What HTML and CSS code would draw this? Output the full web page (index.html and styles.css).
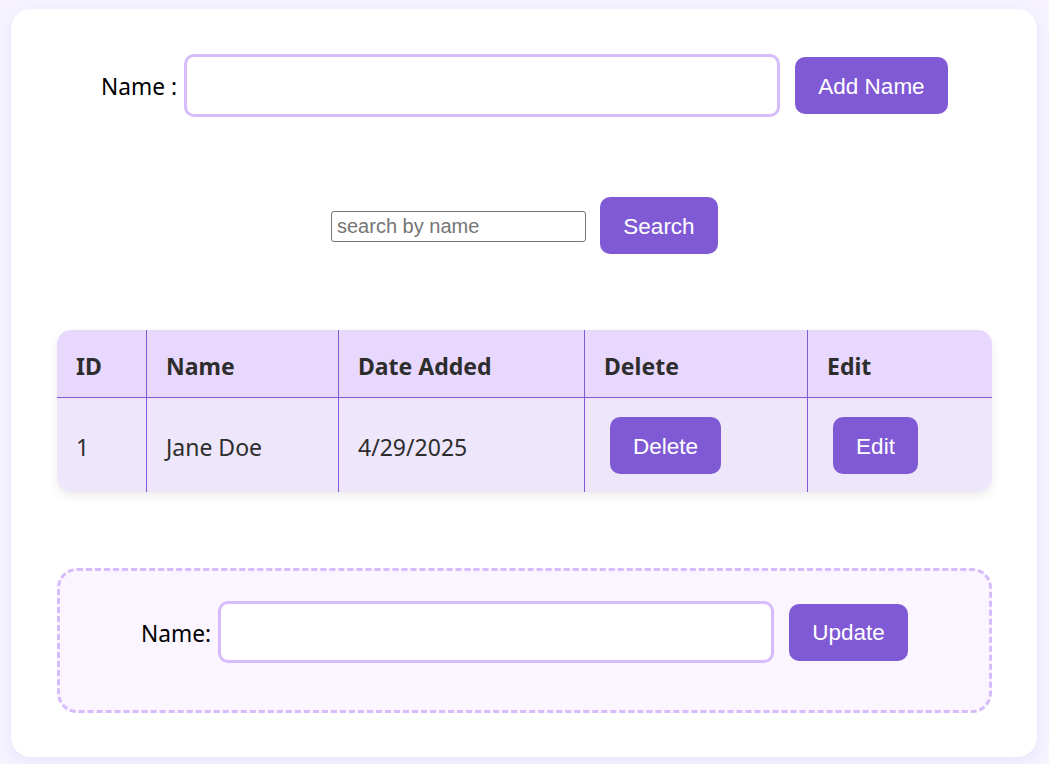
FILE: index.html
```html
<!DOCTYPE html>
<html>
<head>
<meta charset="utf-8">
<link rel="stylesheet" href="styles.css">
</head>
<body>
<div class="card">
  <div class="row add-row">
    <label class="label">Name :</label>
    <input class="name-input" type="text">
    <button class="btn btn-add">Add Name</button>
  </div>
  <div class="row search-row">
    <input class="search-input" type="text" placeholder="search by name">
    <button class="btn btn-search">Search</button>
  </div>
  <div class="table-wrap">
    <table class="table">
      <colgroup>
        <col class="c-id">
        <col class="c-name">
        <col class="c-date">
        <col class="c-del">
        <col class="c-edit">
      </colgroup>
      <thead>
        <tr>
          <th>ID</th>
          <th>Name</th>
          <th>Date Added</th>
          <th>Delete</th>
          <th>Edit</th>
        </tr>
      </thead>
      <tbody>
        <tr>
          <td class="text-cell">1</td>
          <td class="text-cell">Jane Doe</td>
          <td class="text-cell">4/29/2025</td>
          <td><button class="btn btn-cell btn-delete">Delete</button></td>
          <td><button class="btn btn-cell btn-edit">Edit</button></td>
        </tr>
      </tbody>
    </table>
  </div>
  <div class="update-box">
    <div class="row update-row">
      <label class="label">Name:</label>
      <input class="update-input" type="text">
      <button class="btn btn-update">Update</button>
    </div>
  </div>
</div>
</body>
</html>
```

FILE: styles.css
```css
html, body {
  margin: 0;
  padding: 0;
}
body {
  background: #f6f3ff;
  font-family: "Noto Sans", "Open Sans", sans-serif;
  padding: 9px 12px 7px 11px;
}
.card {
  background: #ffffff;
  border-radius: 20px;
  box-shadow: 0 4px 14px rgba(150, 120, 230, 0.12);
  padding: 45px 45px 45px 46px;
  box-sizing: border-box;
  width: 1026px;
  height: 748px;
}
.row {
  display: flex;
  align-items: center;
  justify-content: center;
}
.label {
  font-size: 22.7px;
  color: #000;
  padding-top: 2px;
}
.add-row .label {
  margin-right: 7px;
}
.name-input {
  width: 596px;
  height: 63px;
  box-sizing: border-box;
  border: 3px solid #d6bcfa;
  border-radius: 10px;
  outline: none;
  font-size: 20px;
  padding: 0 10px;
}
.btn {
  background: #805ad5;
  color: #ffffff;
  border: none;
  border-radius: 10px;
  font-family: "Liberation Sans", Arial, sans-serif;
  font-size: 22.5px;
  height: 57px;
  cursor: pointer;
  padding: 2px 0 0;
}
.btn-add {
  width: 153px;
  margin-left: 15px;
}
.search-row {
  margin-top: 80px;
}
.search-input {
  width: 255px;
  height: 31px;
  box-sizing: border-box;
  border: 1px solid #767676;
  border-radius: 3px;
  font-family: "Liberation Sans", Arial, sans-serif;
  font-size: 20px;
  padding: 0 5px;
  margin-top: 1px;
  outline: none;
}
.search-input::placeholder {
  color: #757575;
}
.btn-search {
  width: 118px;
  margin-left: 14px;
}
.table-wrap {
  margin-top: 76px;
  border-radius: 14px;
  overflow: hidden;
  box-shadow: 0 4px 10px rgba(0, 0, 0, 0.08);
}
.table {
  width: 935px;
  border-collapse: separate;
  border-spacing: 0;
  table-layout: fixed;
  color: #2d2d2d;
}
.table th, .table td {
  text-align: left;
  padding: 0 0 0 19px;
  border-left: 1px solid #805ad5;
}
.table th:first-child, .table td:first-child {
  border-left: none;
}
.table th {
  background: #e9d8fd;
  height: 63px;
  padding-top: 4px;
  font-size: 23px;
  font-weight: 700;
  border-bottom: 1px solid #805ad5;
}
.table td {
  background: #eee7fc;
  height: 94px;
  font-size: 23px;
}
.table td.text-cell {
  padding-top: 4px;
  height: 90px;
}
.c-id { width: 89px; }
.c-name { width: 192px; }
.c-date { width: 246px; }
.c-del { width: 223px; }
.c-edit { width: 185px; }
.btn-cell {
  margin-left: 6px;
  margin-top: 1px;
}
.btn-delete { width: 111px; }
.btn-edit { width: 85px; }
.update-box {
  margin-top: 76px;
  border: 3px dashed #d6bcfa;
  border-radius: 20px;
  background: #faf5ff;
  padding: 30px 0 47px;
}
.update-row .label {
  margin-right: 7px;
}
.update-input {
  width: 556px;
  height: 62px;
  box-sizing: border-box;
  border: 3px solid #d6bcfa;
  border-radius: 10px;
  outline: none;
  font-size: 20px;
  padding: 0 10px;
}
.btn-update {
  width: 119px;
  margin-left: 15px;
}
```
